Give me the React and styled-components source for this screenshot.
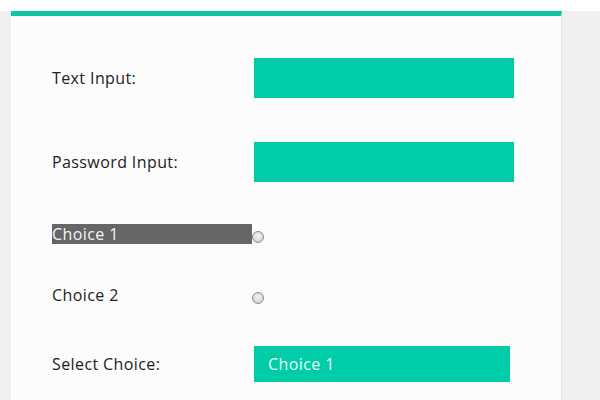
import React from "react";
import styled, { createGlobalStyle } from "styled-components";

const GlobalStyle = createGlobalStyle`
  html, body {
    margin: 0;
    padding: 0;
    background: #ffffff;
  }
  body {
    font-family: "Open Sans", "DejaVu Sans", sans-serif;
  }
`;

const Page = styled.div`
  margin-top: 11px;
  background: #efefef;
  padding-left: 11px;
  height: 389px;
  overflow: hidden;
`;

const Card = styled.form`
  width: 551px;
  height: 100%;
  box-sizing: border-box;
  background: #fcfcfc;
  border-top: 5px solid #0fc4a2;
  border-right: 1px solid #e2e2e2;
  padding: 42px 0 0 41px;
`;

const Row = styled.div`
  display: flex;
  align-items: ${({ align }) => align || "center"};
  margin-bottom: ${({ gap }) => gap}px;
`;

const Label = styled.label`
  width: 200px;
  flex: none;
  font-size: 16px;
  letter-spacing: 0.4px;
  line-height: 20px;
  background: ${({ selected }) => (selected ? "#666666" : "transparent")};
  color: ${({ selected }) => (selected ? "#f4f4f4" : "#222")};
`;

const Field = styled.input`
  width: 260px;
  height: 40px;
  box-sizing: border-box;
  border: none;
  outline: none;
  margin: 0 0 0 2px;
  background: #00cca8;
  color: #fff;
  font: inherit;
`;

const Radio = styled.input.attrs({ type: "radio" })`
  appearance: none;
  width: 12px;
  height: 12px;
  margin: ${({ offset }) => offset}px 0 0 0;
  border-radius: 50%;
  border: 1px solid #8e8e8e;
  box-sizing: border-box;
  background: radial-gradient(circle at 50% 40%, #f4f4f4 0%, #dcdcdc 55%, #c2c2c2 100%);
`;

const Select = styled.select`
  appearance: none;
  width: 256px;
  height: 36px;
  margin-left: 2px;
  border: none;
  outline: none;
  padding: 0 14px;
  background: #00cca8;
  color: #e6fff7;
  font: inherit;
  font-size: 16px;
  letter-spacing: 0.4px;
`;

export default function App() {
  return (
    <>
      <GlobalStyle />
      <Page>
        <Card>
          <Row gap={44}>
            <Label>Text Input:</Label>
            <Field type="text" />
          </Row>
          <Row gap={42}>
            <Label>Password Input:</Label>
            <Field type="password" />
          </Row>
          <Row gap={41} align="flex-start">
            <Label selected>Choice 1</Label>
            <Radio name="choice" offset={7} />
          </Row>
          <Row gap={41} align="flex-start">
            <Label>Choice 2</Label>
            <Radio name="choice" offset={7} />
          </Row>
          <Row gap={0}>
            <Label>Select Choice:</Label>
            <Select defaultValue="1">
              <option value="1">Choice 1</option>
              <option value="2">Choice 2</option>
            </Select>
          </Row>
        </Card>
      </Page>
    </>
  );
}
